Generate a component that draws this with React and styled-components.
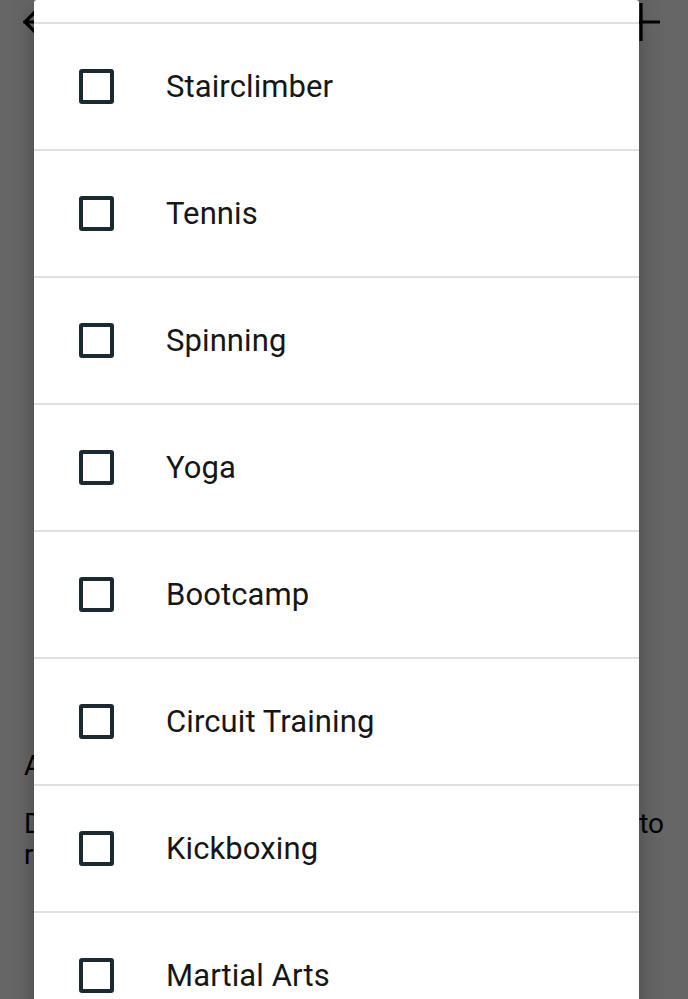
import React from "react";
import styled, { createGlobalStyle } from "styled-components";

const GlobalStyle = createGlobalStyle`
  html, body {
    margin: 0;
    padding: 0;
    background: #ffffff;
    font-family: Roboto, "Noto Sans", "Liberation Sans", sans-serif;
  }
  * {
    box-sizing: border-box;
  }
`;

const Page = styled.div`
  width: 688px;
  height: 999px;
  overflow: hidden;
  position: relative;
  background: #ffffff;
`;

const Header = styled.header`
  display: flex;
  justify-content: space-between;
  align-items: center;
  height: 44px;
  padding: 0 27px 0 19px;
`;

const Content = styled.main`
  padding: 706px 24px 0 24px;
  color: #000000;
  font-size: 28px;
`;

const Heading = styled.h2`
  margin: 0 0 26px 0;
  font-size: 28px;
  font-weight: 400;
  line-height: 32px;
`;

const Paragraph = styled.p`
  margin: 0;
  line-height: 31px;
`;

const Line = styled.span`
  display: block;
  text-align: ${(p) => (p.$full ? "justify" : "left")};
  text-align-last: ${(p) => (p.$full ? "justify" : "left")};
`;

const Scrim = styled.div`
  position: absolute;
  inset: 0;
  background: rgba(0, 0, 0, 0.6);
`;

const Dialog = styled.div`
  position: absolute;
  top: 0;
  left: 34px;
  width: 605px;
  bottom: -40px;
  background: #ffffff;
  border-radius: 3px;
  box-shadow: 0 8px 24px rgba(0, 0, 0, 0.3);
  padding-top: 22px;
  overflow: hidden;
`;

const Row = styled.label`
  display: flex;
  align-items: center;
  height: 127px;
  padding-left: 45px;
  border-top: 2px solid #e0e0e0;
  cursor: pointer;
`;

const Box = styled.span`
  width: 35px;
  height: 35px;
  flex: none;
  border: 4px solid #1b2a31;
  border-radius: 3px;
  background: #ffffff;
`;

const Label = styled.span`
  margin-left: 52px;
  font-size: 31px;
  color: #161616;
  letter-spacing: 0.1px;
`;

const activities = [
  "Stairclimber",
  "Tennis",
  "Spinning",
  "Yoga",
  "Bootcamp",
  "Circuit Training",
  "Kickboxing",
  "Martial Arts",
];

function BackIcon() {
  return (
    <svg width="40" height="44" viewBox="0 0 40 44">
      <path
        d="M6 22 H38 M6 22 L20 8 M6 22 L20 36"
        stroke="#000"
        strokeWidth="3.2"
        fill="none"
        strokeLinecap="square"
      />
    </svg>
  );
}

function AddIcon() {
  return (
    <svg width="40" height="44" viewBox="0 0 40 44">
      <path d="M20 3 V41 M1 22 H39" stroke="#000" strokeWidth="3.2" fill="none" />
    </svg>
  );
}

export default function App() {
  return (
    <>
      <GlobalStyle />
      <Page>
        <Header>
          <BackIcon />
          <AddIcon />
        </Header>
        <Content>
          <Heading>Activities</Heading>
          <Paragraph>
            <Line $full>Decide which of your activities you want to</Line>
            <Line>record in the log.</Line>
          </Paragraph>
        </Content>
        <Scrim />
        <Dialog>
          {activities.map((name) => (
            <Row key={name}>
              <Box />
              <Label>{name}</Label>
            </Row>
          ))}
        </Dialog>
      </Page>
    </>
  );
}
